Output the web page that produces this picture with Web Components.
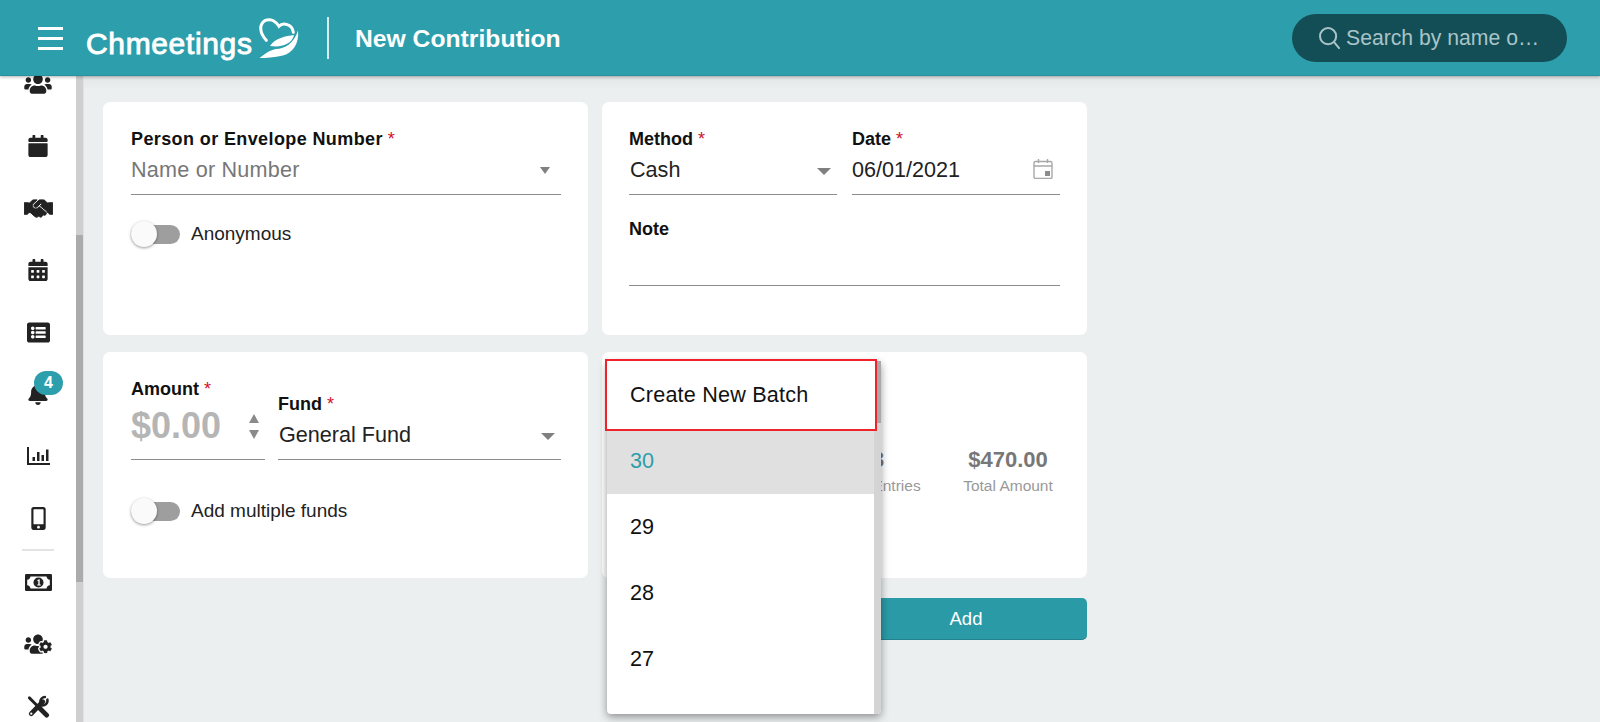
<!DOCTYPE html>
<html lang="en">
<head>
<meta charset="utf-8">
<title>New Contribution</title>
<style>
html,body{margin:0;height:100%;overflow:hidden}
body{font-family:"Liberation Sans",Arial,sans-serif;color:#111;background:#ebeff0}
</style>
</head>
<body>
<app-shell>
  <app-header slot="header" page-title="New Contribution"></app-header>
  <side-nav slot="nav">
    <nav-item><svg width="28" height="22" viewBox="0 0 640 512" fill="currentColor"><path d="M96 224c35.3 0 64-28.7 64-64s-28.7-64-64-64-64 28.7-64 64 28.7 64 64 64zm448 0c35.3 0 64-28.7 64-64s-28.7-64-64-64-64 28.7-64 64 28.7 64 64 64zm32 32h-64c-17.6 0-33.5 7.1-45.1 18.6 40.3 22.1 68.9 62 75.1 109.4h66c17.7 0 32-14.3 32-32v-32c0-35.3-28.7-64-64-64zm-256 0c61.9 0 112-50.1 112-112S381.9 32 320 32 208 82.1 208 144s50.1 112 112 112zm76.8 32h-8.3c-20.8 10-43.9 16-68.5 16s-47.6-6-68.5-16h-8.3C179.6 288 128 339.6 128 403.2V432c0 26.5 21.5 48 48 48h288c26.5 0 48-21.5 48-48v-28.8c0-63.6-51.6-115.2-115.2-115.2zm-223.7-13.4C161.5 263.1 145.6 256 128 256H64c-35.3 0-64 28.7-64 64v32c0 17.7 14.3 32 32 32h65.9c6.3-47.4 34.9-87.3 75.2-109.4z"/></svg></nav-item>
    <nav-item><svg width="20" height="22" viewBox="0 0 448 512" fill="currentColor"><path d="M12 192h424c6.6 0 12 5.4 12 12v260c0 26.5-21.5 48-48 48H48c-26.5 0-48-21.5-48-48V204c0-6.6 5.4-12 12-12zm436-44v-36c0-26.5-21.5-48-48-48h-48V12c0-6.6-5.4-12-12-12h-40c-6.6 0-12 5.4-12 12v52H160V12c0-6.6-5.4-12-12-12h-40c-6.6 0-12 5.4-12 12v52H48C21.5 64 0 85.5 0 112v36c0 6.6 5.4 12 12 12h424c6.6 0 12-5.4 12-12z"/></svg></nav-item>
    <nav-item><svg width="29" height="23" viewBox="0 0 640 512"><rect x="90" y="128" width="45" height="225" fill="currentColor"/><rect x="505" y="128" width="45" height="225" fill="currentColor"/><path fill="currentColor" stroke="currentColor" stroke-width="22" d="M434.7 64h-85.9c-8 0-15.700 3-21.600 8.400l-98.300 90c-.1.1-.2.3-.3.4-16.600 15.600-16.300 40.500-2.100 56 12.700 13.900 39.400 17.600 56.100 2.700.1-.1.3-.1.4-.2l79.900-73.200c6.500-5.900 16.700-5.500 22.600 1 6 6.500 5.500 16.600-1 22.600l-26.100 23.900L504 313.800c2.900 2.400 5.500 5 7.900 7.700V128l-54.600-54.600c-5.900-6-14.100-9.400-22.600-9.400zM544 128.200v223.900c0 17.700 14.300 32 32 32h64V128.200h-96zM0 384h64c17.700 0 32-14.300 32-32V128.200H0V384zm483.900-45.300L334.600 217.500l-30 27.500c-29.700 27.100-75.200 24.500-101.700-4.400-26.900-29.400-24.800-74.900 4.400-101.700L289.100 64h-83.800c-8.500 0-16.600 3.400-22.600 9.400L128 128v223.900h18.300l90.500 81.900c27.400 22.300 67.700 18.100 90-9.300l.2-.2 17.900 15.500c15.900 13 39.400 10.500 52.300-5.400l31.400-38.600 5.400 4.400c13.700 11.100 33.900 9.100 45-4.700l9.500-11.700c11.200-13.800 9.100-33.900-4.600-45.100z"/></svg></nav-item>
    <nav-item><svg width="20" height="22" viewBox="0 0 448 512" fill="currentColor"><path d="M0 464c0 26.5 21.5 48 48 48h352c26.5 0 48-21.5 48-48V192H0v272zm320-196c0-6.6 5.4-12 12-12h40c6.6 0 12 5.4 12 12v40c0 6.6-5.4 12-12 12h-40c-6.6 0-12-5.4-12-12v-40zm0 128c0-6.6 5.4-12 12-12h40c6.6 0 12 5.4 12 12v40c0 6.6-5.4 12-12 12h-40c-6.6 0-12-5.4-12-12v-40zM192 268c0-6.6 5.4-12 12-12h40c6.6 0 12 5.4 12 12v40c0 6.6-5.4 12-12 12h-40c-6.6 0-12-5.4-12-12v-40zm0 128c0-6.6 5.4-12 12-12h40c6.6 0 12 5.4 12 12v40c0 6.6-5.4 12-12 12h-40c-6.6 0-12-5.4-12-12v-40zM64 268c0-6.6 5.4-12 12-12h40c6.6 0 12 5.4 12 12v40c0 6.6-5.4 12-12 12H76c-6.6 0-12-5.4-12-12v-40zm0 128c0-6.6 5.4-12 12-12h40c6.6 0 12 5.4 12 12v40c0 6.6-5.4 12-12 12H76c-6.6 0-12-5.4-12-12v-40zM400 64h-48V16c0-8.8-7.2-16-16-16h-32c-8.8 0-16 7.2-16 16v48H160V16c0-8.8-7.2-16-16-16h-32c-8.8 0-16 7.2-16 16v48H48C21.5 64 0 85.5 0 112v48h448v-48c0-26.5-21.5-48-48-48z"/></svg></nav-item>
    <nav-item><svg width="23" height="23" viewBox="0 0 512 512" fill="currentColor"><path d="M464 480H48c-26.51 0-48-21.49-48-48V80c0-26.51 21.49-48 48-48h416c26.51 0 48 21.49 48 48v352c0 26.51-21.49 48-48 48zM128 120c-22.091 0-40 17.909-40 40s17.909 40 40 40 40-17.909 40-40-17.909-40-40-40zm0 96c-22.091 0-40 17.909-40 40s17.909 40 40 40 40-17.909 40-40-17.909-40-40-40zm0 96c-22.091 0-40 17.909-40 40s17.909 40 40 40 40-17.909 40-40-17.909-40-40-40zm288-136v-32c0-6.627-5.373-12-12-12H204c-6.627 0-12 5.373-12 12v32c0 6.627 5.373 12 12 12h200c6.627 0 12-5.373 12-12zm0 96v-32c0-6.627-5.373-12-12-12H204c-6.627 0-12 5.373-12 12v32c0 6.627 5.373 12 12 12h200c6.627 0 12-5.373 12-12zm0 96v-32c0-6.627-5.373-12-12-12H204c-6.627 0-12 5.373-12 12v32c0 6.627 5.373 12 12 12h200c6.627 0 12-5.373 12-12z"/></svg></nav-item>
    <nav-item badge="4"><svg width="20" height="22" viewBox="0 0 448 512" fill="currentColor"><path d="M224 512c35.32 0 63.97-28.65 63.97-64H160.03c0 35.35 28.65 64 63.97 64zm215.39-149.71c-19.32-20.76-55.47-51.99-55.47-154.29 0-77.7-54.48-139.9-127.94-155.16V32c0-17.67-14.32-32-31.98-32s-31.98 14.33-31.98 32v20.84C118.56 68.1 64.08 130.3 64.08 208c0 102.3-36.15 133.53-55.47 154.29-6 6.45-8.66 14.16-8.61 21.71.11 16.4 12.98 32 32.1 32h383.8c19.12 0 32-15.6 32.1-32 .05-7.55-2.61-15.27-8.61-21.71z"/></svg></nav-item>
    <nav-item><svg width="23" height="18" viewBox="0 0 23 18" fill="currentColor"><path d="M0 0h2v16h21v2H0z"/><rect x="5.5" y="10" width="2.5" height="4"/><rect x="10" y="5" width="2.5" height="9"/><rect x="14.5" y="8" width="2.5" height="6"/><rect x="19" y="2.5" width="2.5" height="11.5"/></svg></nav-item>
    <nav-item><svg width="15" height="23" viewBox="0 0 320 512" fill="currentColor"><path d="M272 0H48C21.5 0 0 21.5 0 48v416c0 26.5 21.5 48 48 48h224c26.5 0 48-21.5 48-48V48c0-26.5-21.5-48-48-48zM160 480c-17.7 0-32-14.3-32-32s14.3-32 32-32 32 14.3 32 32-14.3 32-32 32zm112-108c0 6.6-5.4 12-12 12H60c-6.6 0-12-5.4-12-12V60c0-6.6 5.4-12 12-12h200c6.6 0 12 5.4 12 12v312z"/></svg></nav-item>
    <nav-divider></nav-divider>
    <nav-item><svg width="27" height="17" viewBox="0 0 27 17"><rect width="27" height="17" rx="1.2" fill="currentColor"/><path fill="#fff" d="M5.5 2.5H21.5Q22 5.5 24.8 5.8V11.2Q22 11.5 21.5 14.5H5.5Q5 11.5 2.2 11.2V5.8Q5 5.5 5.5 2.5Z"/><circle cx="13.5" cy="8.5" r="5" fill="currentColor"/><path fill="#fff" d="M12.4 6.2l1.6-.9h.7v5.2h1v1h-3.4v-1h1V6.9l-.9.3z"/></svg></nav-item>
    <nav-item><svg width="28" height="22" viewBox="0 0 640 512" fill="currentColor"><path d="M610.5 341.3c2.6-14.1 2.6-28.5 0-42.6l25.8-14.9c3-1.7 4.3-5.2 3.3-8.5-6.7-21.6-18.2-41.2-33.2-57.4-2.3-2.5-6-3.1-9-1.4l-25.8 14.9c-10.9-9.3-23.4-16.5-36.9-21.3v-29.8c0-3.4-2.4-6.4-5.7-7.1-22.3-5-45-4.8-66.2 0-3.3.7-5.7 3.7-5.7 7.1v29.8c-13.5 4.8-26 12-36.9 21.3l-25.8-14.9c-2.9-1.7-6.7-1.1-9 1.4-15 16.2-26.5 35.8-33.2 57.4-1 3.3.4 6.8 3.3 8.5l25.8 14.9c-2.6 14.1-2.6 28.5 0 42.6l-25.8 14.9c-3 1.7-4.3 5.2-3.3 8.5 6.7 21.6 18.2 41.1 33.2 57.4 2.3 2.5 6 3.1 9 1.4l25.8-14.9c10.9 9.3 23.4 16.5 36.9 21.3v29.8c0 3.4 2.4 6.4 5.7 7.1 22.3 5 45 4.8 66.2 0 3.3-.7 5.7-3.7 5.7-7.1v-29.8c13.5-4.8 26-12 36.9-21.3l25.8 14.9c2.9 1.7 6.7 1.1 9-1.4 15-16.2 26.5-35.8 33.2-57.4 1-3.3-.4-6.8-3.3-8.5l-25.8-14.9zM496 368.5c-26.8 0-48.5-21.8-48.5-48.5s21.8-48.5 48.5-48.5 48.5 21.8 48.5 48.5-21.7 48.5-48.5 48.5zM96 224c35.3 0 64-28.7 64-64s-28.7-64-64-64-64 28.7-64 64 28.7 64 64 64zm224 32c1.9 0 3.7-.5 5.6-.6 8.3-21.7 20.5-42.1 36.3-59.2 7.4-8 17.9-12.6 28.9-12.6 6.9 0 13.7 1.8 19.6 5.3l7.9 4.6c.8-.5 1.6-.9 2.4-1.4 7-14.6 11.2-30.8 11.2-48 0-61.9-50.1-112-112-112S208 82.1 208 144c0 61.9 50.1 112 112 112zm105.2 194.5c-2.3-1.2-4.6-2.6-6.8-3.9-8.2 4.8-15.3 9.8-27.5 9.8-10.9 0-21.4-4.6-28.9-12.6-18.3-19.8-32.3-43.9-40.2-69.6-10.7-34.5 24.9-49.7 25.8-50.3-.1-2.6-.1-5.2 0-7.8l-7.9-4.6c-3.8-2.2-7-5-9.8-8.1-3.3.2-6.5.6-9.8.6-24.6 0-47.6-6-68.5-16h-8.3C179.6 288 128 339.6 128 403.2V432c0 26.5 21.5 48 48 48h255.4c-3.7-6-6.2-12.8-6.2-20.3v-9.2zM173.1 274.6C161.5 263.1 145.6 256 128 256H64c-35.3 0-64 28.7-64 64v32c0 17.7 14.3 32 32 32h65.9c6.3-47.4 34.9-87.3 75.2-109.4z"/></svg></nav-item>
    <nav-item><svg width="24" height="23" viewBox="0 0 24 24"><g fill="none" stroke="currentColor" stroke-linecap="round"><path d="M3 3l9 9" stroke-width="3"/><path d="M13 13l8 8" stroke-width="5"/><path d="M17 7L5 19.5" stroke-width="5"/><path d="M21.8 4.8A5 5 0 0 1 15 10.5M14.4 6.8A5 5 0 0 1 19.2 2.2" stroke-width="2.6"/></g><circle cx="5" cy="19.5" r="1.2" fill="#fff"/></svg></nav-item>
  </side-nav>
  <form-board>
    <form-card>
      <form-field style="--label-spacing:.39px"><span slot="label">Person or Envelope Number</span>
        <field-value placeholder caret="small">Name or Number</field-value></form-field>
      <toggle-switch style="margin-top:26px">Anonymous</toggle-switch>
    </form-card>
    <form-card style="padding-left:27px">
      <field-row>
        <form-field><span slot="label">Method</span><field-value caret="large">Cash</field-value></form-field>
        <form-field><span slot="label">Date</span><field-value style="padding-left:0">06/01/2021<svg slot="end" style="margin-right:1px;margin-top:-2px" width="20" height="20" viewBox="0 0 20 20" fill="none" stroke="#a8a8a8" stroke-width="1.4"><rect x="1" y="2.5" width="18" height="17" rx="1.5"/><path d="M1 7h18M5.5 0v4M14.5 0v4"/><rect x="12" y="12" width="5" height="5" fill="#8c8c8c" stroke="none"/></svg></field-value></form-field>
      </field-row>
      <form-field optional style="margin-top:23px;--control:45px"><span slot="label">Note</span><field-value></field-value></form-field>
    </form-card>
    <form-card>
      <field-row bottom gap="13">
        <form-field style="flex:0 0 134px;--control:59px"><span slot="label">Amount</span><amount-value>$0.00</amount-value></form-field>
        <form-field style="flex:1 1 auto"><span slot="label">Fund</span><field-value caret="large">General Fund</field-value></form-field>
      </field-row>
      <toggle-switch style="margin-top:38px">Add multiple funds</toggle-switch>
    </form-card>
    <form-card>
      <stat-row>
        <stat-block><span slot="value">3</span>Total Entries</stat-block>
        <stat-block><span slot="value">$470.00</span>Total Amount</stat-block>
      </stat-row>
      <batch-menu>
        <batch-option annotated>Create New Batch</batch-option>
        <batch-option selected>30</batch-option>
        <batch-option>29</batch-option>
        <batch-option>28</batch-option>
        <batch-option>27</batch-option>
      </batch-menu>
    </form-card>
    <action-row><primary-button>Add</primary-button></action-row>
  </form-board>
</app-shell>
<script>
function define(name, css, html, setup){
  customElements.define(name, class extends HTMLElement{
    constructor(){
      super();
      const root=this.attachShadow({mode:'open'});
      root.innerHTML='<style>'+css+'</style>'+html;
    }
    connectedCallback(){ if(setup) setup(this, this.shadowRoot); }
  });
}
define('app-shell',
 `:host{display:flex;flex-direction:column;height:722px;overflow:hidden}
  .body{flex:1;min-height:0;display:flex}
  .head{position:relative;z-index:5}`,
 `<div class="head"><slot name="header"></slot></div><div class="body"><slot name="nav"></slot><slot></slot></div>`);
define('app-header',
 `:host{display:flex;align-items:center;height:76px;box-sizing:border-box;background:#2d9eab;color:#fff;padding:0 33px 0 38px;box-shadow:0 1px 3px rgba(0,0,0,.3);border-bottom:1px solid #2a909c}
  .burger{width:25px;display:flex;flex-direction:column;gap:7.6px;margin-right:23px;margin-top:2px}
  .burger i{display:block;height:2.4px;background:#fff}
  .logo{display:flex;align-items:flex-start;width:215px;height:46px}
  .word{font-size:30px;letter-spacing:.65px;line-height:46px;margin-top:6px;-webkit-text-stroke:.9px #fff;white-space:nowrap}
  svg.mark{margin:3px 0 0 5px;flex:none}
  .rule{width:2px;height:42px;background:#d6eef0;margin:0 26px 0 26px}
  h1{margin:2px 0 0;font-size:24.7px;font-weight:700;flex:1;white-space:nowrap}
  .search{width:275px;height:48px;box-sizing:border-box;border-radius:24px;background:#134e56;display:flex;align-items:center;gap:6px;padding:0 0 0 26px;color:#a9c4c6;font-size:21.2px;white-space:nowrap}`,
 `<div class="burger"><i></i><i></i><i></i></div>
  <div class="logo"><span class="word">Chmeetings</span>
   <svg class="mark" width="42" height="42" viewBox="0 0 42 42"><path d="M8.3 22.300C1.700 15 .8 6.700 6.700 2.700C13.300-.3 18.300 4 21 8.300C25 4 34.300 6.200 35.300 14.300" fill="none" stroke="#fff" stroke-width="3" stroke-linecap="round"/><path fill="#fff" d="M12 28C17 20 28 18 36 17C34.500 25 25 28.500 18 28.500Z"/><path fill="#fff" d="M1.500 40C8 35 12 32 18 31C27 31 36 25 40 12.500C41.500 25 35 35 25 37.500C16 39.500 8 40 1.500 40Z"/></svg></div>
  <div class="rule"></div><h1></h1>
  <div class="search"><svg width="22" height="24" viewBox="0 0 24 26" fill="none" stroke="#a9c4c6" stroke-width="2.200"><circle cx="11" cy="11" r="8.800"/><path d="M17.500 17.500L23 24" stroke-linecap="round"/></svg><span>Search by name o…</span></div>`,
 (el,r)=>{r.querySelector('h1').textContent=el.getAttribute('page-title');});
define('side-nav',
 `:host{display:flex;flex:none;width:84px;background:#fff;color:#222;overflow:hidden}
  .list{width:76px;flex:none;margin-top:-23px;display:flex;flex-direction:column}
  .bar{width:8px;flex:none;background:#cfcfcf;padding-top:159px;box-sizing:border-box;border-right:1px solid #dfe2e3}
  .bar i{display:block;height:347px;background:#ababab}`,
 `<div class="list"><slot></slot></div><div class="bar"><i></i></div>`);
define('nav-item',
 `:host{display:flex;align-items:center;justify-content:center;height:62px;flex:none;position:relative}
  .b{position:absolute;left:34px;top:8px;width:29px;height:24px;border-radius:12px;background:#2d9eab;color:#fff;font:700 16px/24px "Liberation Sans",Arial,sans-serif;text-align:center}`,
 `<slot></slot>`,
 (el,r)=>{ if(el.hasAttribute('badge')&&!r.querySelector('.b')){const s=document.createElement('span');s.className='b';s.textContent=el.getAttribute('badge');r.appendChild(s);} });
define('nav-divider',`:host{display:block;height:2px;margin:0 22px;background:#e3e3e3;flex:none}`,``);
define('form-board',
 `:host{flex:1;min-width:0;display:grid;grid-template-columns:485px 485px;grid-template-rows:233px 226px auto;gap:17px 14px;padding:26px 0 0 19px;align-content:start;background:linear-gradient(#e3e6e7,#ebeff0 14px)}`,
 `<slot></slot>`);
define('form-card',
 `:host{display:block;position:relative;background:#fff;border-radius:7px;padding:26px 27px 0 28px;box-sizing:border-box}`,
 `<slot></slot>`);
define('field-row',
 `:host{display:flex;gap:var(--gap,15px)}:host([bottom]){align-items:flex-end}`,
 `<slot></slot>`,
 (el)=>{ if(el.hasAttribute('gap')) el.style.setProperty('--gap',el.getAttribute('gap')+'px'); });
define('form-field',
 `:host{display:block;flex:1 1 0;min-width:0}
  .l{font-size:18px;font-weight:700;line-height:22px;letter-spacing:var(--label-spacing,0);white-space:nowrap;color:#111}
  .s{color:#d0112b;font-weight:400;margin-left:5px;letter-spacing:0}
  :host([optional]) .s{display:none}
  .c{display:block;border-bottom:1.5px solid #8c8c8c;height:var(--control,44px);box-sizing:content-box}`,
 `<div class="l"><slot name="label"></slot><span class="s">*</span></div><div class="c"><slot></slot></div>`);
define('field-value',
 `:host{display:flex;align-items:center;justify-content:space-between;height:40px;font-size:21.6px;color:#222;white-space:nowrap;padding-left:1px}
  :host([placeholder]){color:#777;letter-spacing:.22px;padding-left:0}
  .end{display:flex;align-items:center;margin-right:6px}
  :host([caret=small]) .end{margin-right:11px}
  .caret{display:none;width:0;height:0;border-style:solid;border-color:#808080 transparent transparent;margin-right:0;margin-top:2px}
  :host([caret=large]) .caret{display:block;border-width:7px 7.500px 0}
  :host([caret=small]) .caret{display:block;border-width:7px 5.500px 0;margin-top:0}`,
 `<slot></slot><span class="end"><slot name="end"></slot><i class="caret"></i></span>`);
define('amount-value',
 `:host{display:flex;align-items:center;justify-content:space-between;height:52px;font-size:36px;font-weight:700;color:#b5b5b5;padding:0 6px 0 0;box-sizing:border-box}
  .spin{display:flex;flex-direction:column;gap:7px}
  .spin i{display:block;width:0;height:0;border-style:solid;border-color:transparent}
  .u{border-width:0 5.500px 9px!important;border-bottom-color:#8a8a8a!important}
  .d{border-width:9px 5.500px 0!important;border-top-color:#8a8a8a!important}`,
 `<slot></slot><span class="spin"><i class="u"></i><i class="d"></i></span>`);
define('toggle-switch',
 `:host{display:flex;align-items:center;gap:11px;height:26px;font-size:19px;color:#222}
  .t{position:relative;width:49px;height:19px;border-radius:10px;background:#9e9e9e;flex:none}
  .t i{position:absolute;left:0;top:-4px;width:26px;height:26px;border-radius:50%;background:#fafafa;box-shadow:0 1px 3px rgba(0,0,0,.4)}`,
 `<span class="t"><i></i></span><slot></slot>`);
define('stat-row',
 `:host{display:flex;justify-content:flex-end;gap:20px;padding-top:69px;margin-right:-3px}`,
 `<slot></slot>`);
define('stat-block',
 `:host{display:block;width:110px;text-align:center;font-size:15.5px;color:#999;white-space:nowrap}
  .v{display:block;font-size:22px;font-weight:700;color:#777;line-height:26px;margin-bottom:4px}
  .w{display:block}`,
 `<span class="v"><slot name="value"></slot></span><span class="w"><slot></slot></span>`);
define('batch-menu',
 `:host{position:absolute;z-index:3;left:5px;top:9px;width:274px;height:353px;background:#fff;border-radius:0 0 4px 4px;box-shadow:0 3px 8px rgba(0,0,0,.4);display:flex}
  .l{width:267px;flex:none;display:flex;flex-direction:column}
  .b{width:7px;flex:none;background:#d4d4d4;border-radius:0 0 4px 0}
  .b i{display:block;height:62px;background:#a9a9a9}`,
 `<div class="l"><slot></slot></div><div class="b"><i></i></div>`);
define('batch-option',
 `:host{display:flex;align-items:center;height:66px;flex:none;padding-left:23px;box-sizing:border-box;font-size:21.6px;color:#111}
  :host([selected]){background:#e0e0e0;color:#2d9eab;height:67px}
  :host([annotated]){position:relative;z-index:1;height:72px;margin:-2px -3px -4px -2px;padding-left:23px;border:2px solid #f0222a;background:#fff;letter-spacing:.2px}`,
 `<slot></slot>`);
define('action-row',
 `:host{grid-column:2;display:flex;justify-content:flex-end;margin-top:3px}`,
 `<slot></slot>`);
define('primary-button',
 `:host{display:flex;align-items:center;justify-content:center;width:242px;height:42px;box-sizing:border-box;background:#2b9aa7;color:#fff;font-size:18.5px;border-radius:5px;border-bottom:1px solid #23828d}`,
 `<slot></slot>`);
</script>
</body>
</html>
